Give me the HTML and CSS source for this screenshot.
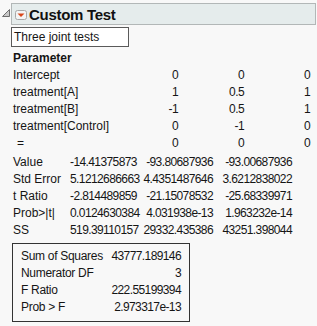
FILE: index.html
```html
<!DOCTYPE html>
<html lang="en">

<head>
    <meta charset="UTF-8">
    <meta name="viewport" content="width=device-width, initial-scale=1.0">
    <title>Custom Test</title>
    <link rel="stylesheet" href="styles.css">
</head>

<body>
    <div class="report">
        <div class="outline-head">
            <div class="disclosure">
                <svg width="11" height="22" viewBox="0 0 11 22">
                    <path d="M9.5 6.5 L9.5 13.5 L2.5 13.5 Z" fill="#c9c9c9" stroke="#6e6e6e" />
                </svg>
            </div>
            <div class="title-bar">
                <span class="menu-icon">
                    <svg width="12" height="10" viewBox="0 0 12 10">
                        <rect x="0.5" y="0.5" width="11" height="9" rx="2" fill="#f4f4f4" stroke="#a8a8a8" />
                        <polygon points="2.5,3.5 9.5,3.5 6,7" fill="#d9461a" />
                    </svg>
                </span>
                <span class="title">Custom Test</span>
            </div>
        </div>

        <div class="note">Three joint tests</div>

        <div class="params">
            <div class="head">Parameter</div>

            <div>Intercept</div>
            <div class="num">0</div>
            <div class="num">0</div>
            <div class="num">0</div>

            <div>treatment[A]</div>
            <div class="num">1</div>
            <div class="num">0.5</div>
            <div class="num">1</div>

            <div>treatment[B]</div>
            <div class="num">-1</div>
            <div class="num">0.5</div>
            <div class="num">1</div>

            <div>treatment[Control]</div>
            <div class="num">0</div>
            <div class="num">-1</div>
            <div class="num">0</div>

            <div class="eq">=</div>
            <div class="num">0</div>
            <div class="num">0</div>
            <div class="num">0</div>
        </div>

        <div class="results">
            <div>Value</div>
            <div class="num">-14.41375873</div>
            <div class="num">-93.80687936</div>
            <div class="num">-93.00687936</div>

            <div>Std Error</div>
            <div class="num">5.1212686663</div>
            <div class="num">4.4351487646</div>
            <div class="num">3.6212838022</div>

            <div>t Ratio</div>
            <div class="num">-2.814489859</div>
            <div class="num">-21.15078532</div>
            <div class="num">-25.68339971</div>

            <div>Prob&gt;|t|</div>
            <div class="num">0.0124630384</div>
            <div class="num">4.031938e-13</div>
            <div class="num">1.963232e-14</div>

            <div>SS</div>
            <div class="num">519.39110157</div>
            <div class="num">29332.435386</div>
            <div class="num">43251.398044</div>
        </div>

        <div class="test-box">
            <div class="label">Sum of Squares</div>
            <div class="num">43777.189146</div>

            <div class="label">Numerator DF</div>
            <div class="num">3</div>

            <div class="label">F Ratio</div>
            <div class="num">222.55199394</div>

            <div class="label">Prob &gt; F</div>
            <div class="num">2.973317e-13</div>
        </div>
    </div>
</body>

</html>
```

FILE: styles.css
```css
body {
    margin: 0;
    background-color: #f8f8f8;
    color: #151515;
    font-family: "Liberation Sans", Arial, sans-serif;
    font-size: 12px;
}

.report {
    width: 317px;
}

.outline-head {
    display: grid;
    grid-template-columns: 11px 305px;
    padding-top: 3px;
}

/* disclosure triangle, open state */
.disclosure {
    height: 22px;
}

.disclosure svg {
    display: block;
}

.title-bar {
    height: 22px;
    box-sizing: border-box;
    border: 1px solid #b2b7b7;
    background-color: #e5ecec;
    display: flex;
    align-items: center;
    padding-left: 3px;
}

.menu-icon {
    display: flex;
    margin-top: 1px;
}

.title {
    margin-left: 2px;
    font-size: 15px;
    font-weight: bold;
    letter-spacing: -0.3px;
    color: #111;
}

.note {
    margin: 2px 0 0 11px;
    width: 118px;
    height: 20px;
    box-sizing: border-box;
    border: 1px solid #5a5a5a;
    background-color: #fff;
    padding-left: 2px;
    line-height: 18px;
}

.params,
.results,
.test-box {
    display: grid;
    line-height: 17px;
}

.params {
    margin-top: 3px;
    padding-left: 13px;
    grid-template-columns: 100px 65px 66px 66px;
}

.params .head {
    grid-column: 1 / -1;
    font-weight: bold;
}

.params .eq {
    padding-left: 4px;
}

.results {
    margin-top: 2px;
    padding-left: 13px;
    grid-template-columns: 57px 65px 78px 79px;
}

.num {
    text-align: right;
    letter-spacing: -0.6px;
    white-space: nowrap;
}

.test-box {
    margin: 4px 0 0 12px;
    width: 178px;
    box-sizing: border-box;
    border: 1px solid #333;
    padding: 4px 8px 5px 8px;
    grid-template-columns: 1fr auto;
}

.test-box .label {
    letter-spacing: -0.3px;
}
```
